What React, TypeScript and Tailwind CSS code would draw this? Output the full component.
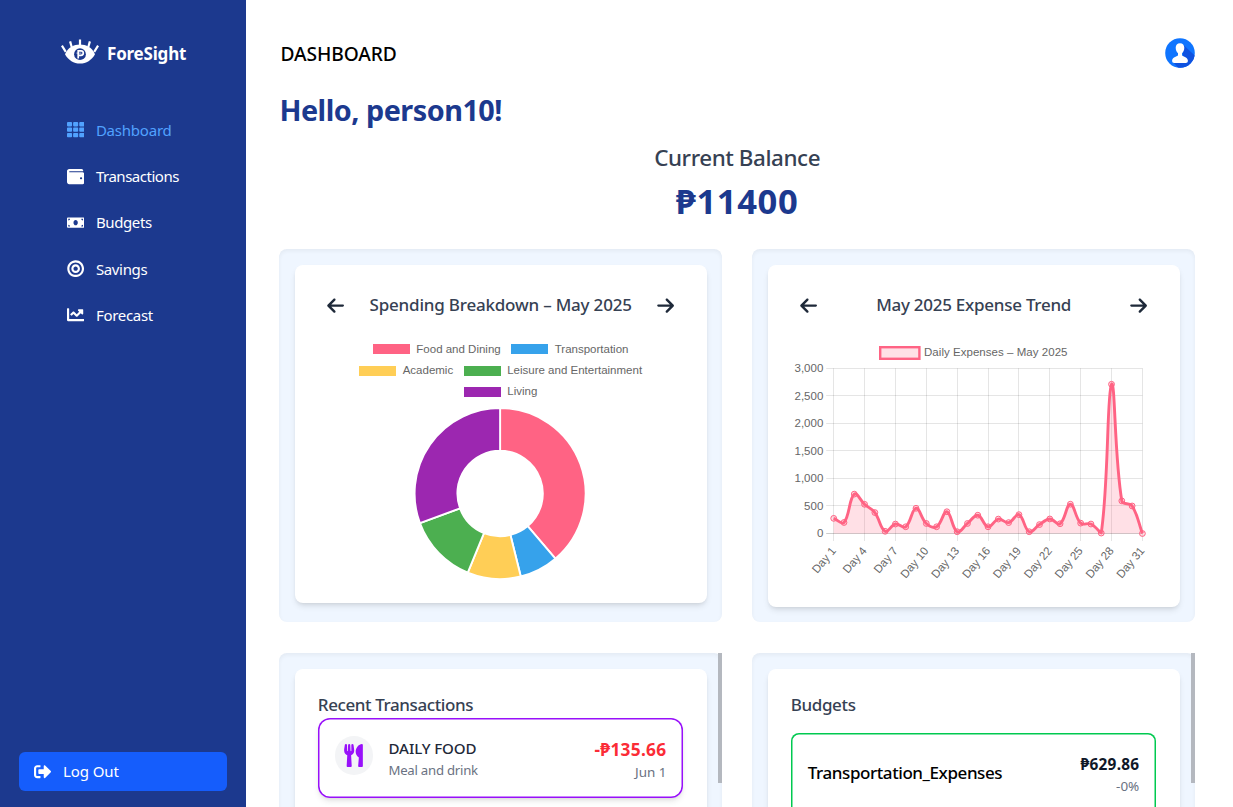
import type { ReactNode } from "react";
import {
  FaBullseye,
  FaChartLine,
  FaMoneyBill,
  FaSignOutAlt,
  FaTh,
  FaUtensils,
  FaWallet,
} from "react-icons/fa";
import { FaArrowLeft, FaArrowRight } from "react-icons/fa6";

const navItems = [
  { label: "Dashboard", Icon: FaTh, style: "text-[#51a2ff] tracking-[-0.22px]" },
  { label: "Transactions", Icon: FaWallet, style: "text-white tracking-[-0.48px]" },
  { label: "Budgets", Icon: FaMoneyBill, style: "text-white tracking-[-0.38px]" },
  { label: "Savings", Icon: FaBullseye, style: "text-white tracking-[-0.35px]" },
  { label: "Forecast", Icon: FaChartLine, style: "text-white tracking-[-0.30px]" },
];

const categories = [
  { label: "Food and Dining", color: "#ff6384", from: 0, to: 139.7 },
  { label: "Transportation", color: "#36a2eb", from: 139.7, to: 166 },
  { label: "Academic", color: "#ffce56", from: 166, to: 202.2 },
  { label: "Leisure and Entertainment", color: "#4caf50", from: 202.2, to: 249.7 },
  { label: "Living", color: "#9c27b0", from: 249.7, to: 360 },
];

const expenses = [
  275, 200, 715, 530, 380, 40, 172, 122, 458, 182, 122, 395, 32, 182, 332, 122, 262, 198, 342, 32,
  162, 264, 177, 532, 188, 172, 8, 2710, 592, 500, 0,
];

function EyeLogo() {
  return (
    <svg width="38" height="26" viewBox="0 0 38 26" fill="none">
      <path d="M4 15.200C7 8.400 12.800 5.600 19 5.600s12 2.800 15 9.600C30.500 21.300 25.400 24.500 19 24.500S7.500 21.300 4 15.200Z" fill="#fff" />
      <path
        d="M.9 6.700 4.800 12.900M9.100 2.400 10.700 8M19 .4V7M28.900 2.400 27.300 8M37.100 6.700 33.200 12.900"
        stroke="#fff"
        strokeWidth="2.200"
      />
      <circle cx="19" cy="15.200" r="5.900" fill="#1c398e" />
      <path d="M17.200 19.600V11.800H20a2.300 2.300 0 0 1 0 4.600H17.200" stroke="#fff" strokeWidth="1.700" />
      <path d="M15.400 14.100H20.500" stroke="#fff" strokeWidth=".7" />
    </svg>
  );
}

function Avatar() {
  return (
    <svg width="30" height="30" viewBox="0 0 30 30">
      <defs>
        <clipPath id="avatar-disc">
          <circle cx="15" cy="15" r="14.800" />
        </clipPath>
      </defs>
      <g clipPath="url(#avatar-disc)">
        <rect width="30" height="30" fill="#0f75ff" />
        <path d="M18 6.500 33 20.500V32H15L8.500 24.500 18 20Z" fill="#0f52e0" />
        <path
          d="M15 5.200c-2.800 0-4.300 1.900-4.300 4.500 0 2.500 1 4.500 2.300 5.600v2c-.3 1.100-5.600 1.600-5.900 5.100-.1 1.700.8 2.500 2.300 2.500h11.200c1.500 0 2.400-.8 2.300-2.500-.3-3.500-5.600-4-5.900-5.100v-2c1.300-1.100 2.300-3.100 2.300-5.600 0-2.600-1.500-4.500-4.300-4.500Z"
          fill="#fff"
        />
      </g>
    </svg>
  );
}

function Sidebar() {
  return (
    <aside className="flex h-full w-[246.400px] shrink-0 flex-col bg-[#1c398e] text-white">
      <div className="flex items-center gap-[8px] pt-[38.500px] pl-[61px]">
        <EyeLogo />
        <span className="pt-[3.500px] text-[17px] leading-[24px] font-bold tracking-[-0.200px]">ForeSight</span>
      </div>
      <nav className="mt-[53px] flex flex-col gap-[23.200px] pl-[66.800px]">
        {navItems.map(({ label, Icon, style }) => (
          <a key={label} className={`flex h-[23px] items-center gap-[11.800px] text-[15px] leading-[23px] ${style}`}>
            <Icon className="mb-[1px] h-[17.300px] w-[17.300px]" />
            <span>{label}</span>
          </a>
        ))}
      </nav>
      <button className="mt-auto mb-[16.500px] ml-[19px] flex h-[38.500px] w-[208px] items-center gap-[11.500px] rounded-[6px] bg-[#155dfc] pl-[15.200px] text-[15px] leading-[23px] tracking-[-0.100px]">
        <FaSignOutAlt className="h-[17.300px] w-[17.300px]" />
        Log Out
      </button>
    </aside>
  );
}

function Panel({ className, scroll, children }: { className: string; scroll?: boolean; children: ReactNode }) {
  return (
    <section
      className={`relative w-[442.500px] rounded-[8px] bg-[#eff6ff] p-[15.400px] inset-shadow-[0_2px_4px_rgb(0_0_0/0.05)] ${className}`}
    >
      {children}
      {scroll && <div className="absolute top-0 right-0 h-[130px] w-[4px] bg-[#b4b8bf]" />}
    </section>
  );
}

function ChartHeader({ title, style }: { title: string; style: string }) {
  return (
    <div className="flex h-[24px] items-center justify-between px-[31px] text-[#1e2939]">
      <FaArrowLeft className="h-[19.200px] w-[19.200px]" />
      <h3 className={`text-[17px] leading-[24px] font-medium text-[#364153] ${style}`}>{title}</h3>
      <FaArrowRight className="h-[19.200px] w-[19.200px]" />
    </div>
  );
}

function LegendItem({ label, color }: { label: string; color: string }) {
  return (
    <div className="flex items-center gap-[6.500px]">
      <svg width="37" height="10">
        <rect width="37" height="10" fill={color} />
      </svg>
      <span>{label}</span>
    </div>
  );
}

function Doughnut() {
  const outer = 85.500;
  const inner = 42.700;
  const point = (r: number, deg: number) => {
    const a = (deg * Math.PI) / 180;
    return `${(86.500 + r * Math.sin(a)).toFixed(2)} ${(86.500 - r * Math.cos(a)).toFixed(2)}`;
  };
  return (
    <svg width="173" height="173" viewBox="0.400 0 173 173">
      {categories.map(({ label, color, from, to }) => {
        const large = to - from > 180 ? 1 : 0;
        return (
          <path
            key={label}
            d={`M${point(outer, from)}A${outer} ${outer} 0 ${large} 1 ${point(outer, to)}L${point(inner, to)}A${inner} ${inner} 0 ${large} 0 ${point(inner, from)}Z`}
            fill={color}
            stroke="#fff"
            strokeWidth="1.900"
            strokeLinejoin="round"
          />
        );
      })}
    </svg>
  );
}

const LEFT = 65.700;
const TOP = 28.300;
const BASE = 193.500;
const STEP = 10.290;
const UNIT = (BASE - TOP) / 3000;

function splinePath(pts: { x: number; y: number }[]) {
  const tension = 0.4;
  const clamp = (y: number) => Math.min(BASE, Math.max(TOP, y));
  const controls = pts.map((p, i) => {
    const prev = pts[i - 1] ?? p;
    const next = pts[i + 1] ?? p;
    const d01 = Math.hypot(p.x - prev.x, p.y - prev.y);
    const d12 = Math.hypot(next.x - p.x, next.y - p.y);
    const fa = (tension * d01) / (d01 + d12);
    const fb = (tension * d12) / (d01 + d12);
    return {
      before: { x: p.x - fa * (next.x - prev.x), y: clamp(p.y - fa * (next.y - prev.y)) },
      after: { x: p.x + fb * (next.x - prev.x), y: clamp(p.y + fb * (next.y - prev.y)) },
    };
  });
  return pts.slice(1).reduce((d, p, i) => {
    const a = controls[i].after;
    const b = controls[i + 1].before;
    return `${d}C${a.x.toFixed(2)} ${a.y.toFixed(2)} ${b.x.toFixed(2)} ${b.y.toFixed(2)} ${p.x.toFixed(2)} ${p.y.toFixed(2)}`;
  }, `M${pts[0].x} ${pts[0].y}`);
}

function TrendChart() {
  const pts = expenses.map((v, i) => ({ x: LEFT + i * STEP, y: BASE - v * UNIT }));
  const right = LEFT + 30 * STEP;
  const line = splinePath(pts);
  return (
    <svg
      className="block font-['Liberation_Sans',Arial,sans-serif] text-[11.500px]"
      width="411"
      height="250"
      viewBox="0 0 411 250"
      fill="#666"
    >
      <rect x="112.200" y="7.200" width="39.200" height="11.600" fill="#ffe0e6" stroke="#ff6384" strokeWidth="2.400" />
      <text x="156" y="16.300" textLength="143.500">Daily Expenses – May 2025</text>
      {["0", "500", "1,000", "1,500", "2,000", "2,500", "3,000"].map((label, i) => {
        const y = BASE - i * 500 * UNIT;
        return (
          <g key={label}>
            <path d={`M${LEFT - 7.500} ${Math.floor(y) + 0.500}H${right}`} stroke="#000" strokeOpacity={i ? 0.1 : 0.2} />
            <text x="55.300" y={y + 3.700} textAnchor="end">{label}</text>
          </g>
        );
      })}
      {Array.from({ length: 11 }, (_, i) => {
        const x = LEFT + i * 3 * STEP;
        return (
          <g key={i}>
            <path d={`M${Math.floor(x) + 0.500} ${TOP}V${BASE + 7.500}`} stroke="#000" strokeOpacity="0.1" />
            <text textAnchor="end" transform={`translate(${x + 2.800} ${BASE + 17.500}) rotate(-50)`}>
              {`Day ${i * 3 + 1}`}
            </text>
          </g>
        );
      })}
      <path d={`${line}V${BASE}H${LEFT}Z`} fill="#ff6384" fillOpacity="0.2" />
      <path d={line} fill="none" stroke="#ff6384" strokeWidth="2.900" strokeLinejoin="round" />
      {pts.map((p, i) => (
        <circle key={i} cx={p.x} cy={p.y} r="2.900" fill="#ff6384" fillOpacity="0.2" stroke="#ff6384" strokeWidth="1" />
      ))}
    </svg>
  );
}

export default function App() {
  return (
    <div className="flex h-[807px] w-full overflow-hidden bg-white font-['Noto_Sans',sans-serif]">
      <Sidebar />
      <main className="flex min-w-0 flex-1 flex-col pl-[33px]">
        <header className="flex h-[70px] shrink-0 items-start justify-between pt-[38px] pr-[38.500px]">
          <h1 className="pt-[1px] pl-[1px] text-[19.200px] leading-[30px] font-medium tracking-[-0.080px] text-black">DASHBOARD</h1>
          <Avatar />
        </header>
        <h2 className="mt-[22px] text-[28.800px] leading-[36px] font-bold tracking-[-0.500px] text-[#1c398e]">
          Hello, person10!
        </h2>
        <div className="mt-[14px] flex w-[915.500px] flex-col items-center">
          <p className="text-[22.400px] leading-[31px] font-medium tracking-[-0.420px] text-[#364153]">Current Balance</p>
          <p className="mt-[8px] text-[34.600px] leading-[40px] font-bold tracking-[0.600px] text-[#1c398e]">₱11400</p>
        </div>

        <div className="mt-[28.400px] flex gap-[30.500px]">
          <Panel className="h-[373px] shrink-0">
            <div className="flex h-[338.500px] flex-col rounded-[8px] bg-white pt-[28.500px] shadow-md">
              <ChartHeader title="Spending Breakdown – May 2025" style="tracking-[-0.200px]" />
              <div className="mt-[21.500px] flex flex-col items-center font-['Liberation_Sans',Arial,sans-serif] text-[11.500px] leading-[21.200px] text-[#666]">
                <div className="flex gap-[10.500px]">
                  {categories.slice(0, 2).map((c) => <LegendItem key={c.label} label={c.label} color={c.color} />)}
                </div>
                <div className="flex gap-[10.500px]">
                  {categories.slice(2, 4).map((c) => <LegendItem key={c.label} label={c.label} color={c.color} />)}
                </div>
                <LegendItem label={categories[4].label} color={categories[4].color} />
                <div className="mt-[4.500px]">
                  <Doughnut />
                </div>
              </div>
            </div>
          </Panel>
          <Panel className="h-[373px] shrink-0">
            <div className="flex h-[342.400px] flex-col rounded-[8px] bg-white pt-[28.500px] shadow-md">
              <ChartHeader title="May 2025 Expense Trend" style="tracking-[-0.260px]" />
              <div className="mt-[23px]">
                <TrendChart />
              </div>
            </div>
          </Panel>
        </div>

        <div className="mt-[31px] flex gap-[30.500px]">
          <Panel className="h-[373px] shrink-0" scroll>
            <div className="h-[420px] rounded-[8px] bg-white px-[23px] pt-[23.500px] shadow-md">
              <h3 className="text-[17px] leading-[25px] font-medium tracking-[-0.400px] text-[#364153]">Recent Transactions</h3>
              <div className="mt-[0.800px] flex h-[80px] w-[365.500px] items-center rounded-[12px] bg-white px-[16.800px] shadow-md inset-ring-[1.500px] inset-ring-[#9810fa]">
                <div className="mb-[5px] flex h-[38.400px] w-[38.400px] items-center justify-center rounded-full bg-[#f3f4f6]">
                  <FaUtensils className="h-[23px] w-[23px] text-[#9810fa]" />
                </div>
                <div className="mt-[1.500px] ml-[15.500px] flex-1">
                  <p className="text-[15.100px] leading-[23px] font-medium tracking-[-0.100px] text-[#1e2939]">DAILY FOOD</p>
                  <p className="text-[13.200px] leading-[20px] tracking-[-0.250px] text-[#6a7282]">Meal and drink</p>
                </div>
                <div className="mt-[3.500px] text-right">
                  <p className="text-[17.300px] leading-[25px] font-bold tracking-[0.300px] text-[#fb2c36]">-₱135.66</p>
                  <p className="text-[13.440px] leading-[21px] text-[#6a7282]">Jun 1</p>
                </div>
              </div>
            </div>
          </Panel>
          <Panel className="h-[373px] shrink-0" scroll>
            <div className="h-[420px] rounded-[8px] bg-white px-[23px] pt-[23.500px] shadow-md">
              <h3 className="text-[17px] leading-[25px] font-medium tracking-[-0.380px] text-[#364153]">Budgets</h3>
              <div className="mt-[16px] flex h-[130px] w-[365.500px] items-start justify-between rounded-[8px] px-[17px] pt-[19px] inset-ring-[1.500px] inset-ring-[#00c950]">
                <p className="pt-[8px] text-[17px] leading-[25px] font-medium tracking-[-0.420px] text-black">
                  Transportation_Expenses
                </p>
                <div className="pt-[0.300px] text-right">
                  <p className="text-[15.360px] leading-[23px] font-bold tracking-[0.250px] text-[#101828]">₱629.86</p>
                  <p className="text-[13.440px] leading-[20px] text-[#6a7282]">-0%</p>
                </div>
              </div>
            </div>
          </Panel>
        </div>
      </main>
    </div>
  );
}
